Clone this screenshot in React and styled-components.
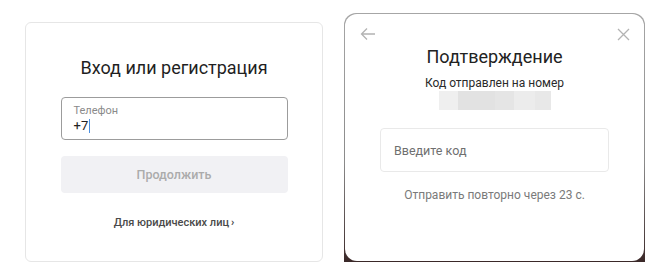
import React from 'react'
import styled, { createGlobalStyle } from 'styled-components'

const Global = createGlobalStyle`
  html, body {
    margin: 0;
    padding: 0;
    background: #fff;
    font-family: Roboto, 'Noto Sans', sans-serif;
  }
`

const Page = styled.div`
  display: flex;
  align-items: flex-start;
  gap: 21px;
  padding: 13px 0 0 25px;
  width: 670px;
  height: 280px;
  box-sizing: border-box;
`

const Card = styled.section`
  margin-top: 9px;
  width: 298px;
  height: 240px;
  box-sizing: border-box;
  border: 1px solid #e6e6e6;
  border-radius: 6px;
  padding: 33px 35px 0 35px;
  display: flex;
  flex-direction: column;
  align-items: center;
`

const Title = styled.h2`
  margin: 0;
  font-size: 18px;
  line-height: 24px;
  font-weight: 400;
  color: #1f1f1f;
  text-align: center;
`

const Field = styled.div`
  margin-top: 17px;
  width: 227px;
  height: 43px;
  box-sizing: border-box;
  border: 1px solid #9c9c9c;
  border-radius: 4px;
  padding: 6px 12px 0;
  display: flex;
  flex-direction: column;
`

const FieldLabel = styled.span`
  font-size: 11px;
  line-height: 14px;
  color: #8a8a8a;
`

const FieldValue = styled.span`
  font-size: 13px;
  line-height: 16px;
  color: #222;
  display: flex;
  align-items: center;
`

const Caret = styled.i`
  display: inline-block;
  width: 1px;
  height: 14px;
  margin-left: 1px;
  background: #4b8fe0;
`

const Button = styled.button`
  margin-top: 16px;
  width: 227px;
  height: 37px;
  border: 0;
  border-radius: 4px;
  background: #f1f1f4;
  color: #ababab;
  font-family: inherit;
  font-size: 12.5px;
  font-weight: 500;
`

const Link = styled.a`
  margin-top: 22px;
  font-size: 11px;
  line-height: 16px;
  font-weight: 500;
  color: #4a4a4a;
  text-decoration: none;
`

const Chevron = styled.b`
  font-weight: 700;
  margin-left: 2px;
`

const Frame = styled.div`
  width: 301px;
  height: 249px;
  box-sizing: border-box;
  padding: 1px;
  background: linear-gradient(#a6a6a6, #8a8a8a 60%, #3a2828);
  border-radius: 12px 12px 0 0;
  overflow: hidden;
  display: flex;
`

const Modal = styled.div`
  flex: 1;
  background: #fff;
  border-radius: 12px;
  display: flex;
  flex-direction: column;
  align-items: center;
`

const ModalHead = styled.div`
  align-self: stretch;
  height: 20px;
  margin-top: 10px;
  padding: 0 14px 0 15px;
  display: flex;
  align-items: center;
  justify-content: space-between;
`

const ModalTitle = styled(Title)`
  margin-top: 1px;
  color: #222;
`

const Sub = styled.p`
  margin: 6px 0 0;
  font-size: 12px;
  line-height: 16px;
  color: #2a2a2a;
`

const Masked = styled.div`
  display: flex;
  height: 19px;
`

const Patch = styled.span`
  width: ${p => p.w}px;
  background: ${p => p.c};
`

const CodeInput = styled.div`
  margin-top: 18px;
  width: 229px;
  height: 44px;
  box-sizing: border-box;
  border: 1px solid #e9e9e9;
  border-radius: 4px;
  padding-left: 13px;
  display: flex;
  align-items: center;
  font-size: 12.5px;
  color: #6f6f6f;
`

const Resend = styled.p`
  margin: 15px 0 0;
  font-size: 12px;
  line-height: 16px;
  color: #7a7a7a;
`

const patches = [
  [19, '#efefef'],
  [37, '#e2e2e2'],
  [19, '#e5e5e5'],
  [21, '#ececec'],
  [16, '#e8e8e8'],
]

export default function App() {
  return (
    <Page>
      <Global />
      <Card>
        <Title>Вход или регистрация</Title>
        <Field>
          <FieldLabel>Телефон</FieldLabel>
          <FieldValue>+7<Caret /></FieldValue>
        </Field>
        <Button disabled>Продолжить</Button>
        <Link href='#'>Для юридических лиц<Chevron>›</Chevron></Link>
      </Card>

      <Frame>
        <Modal>
          <ModalHead>
            <svg width='16' height='14' viewBox='0 0 16 14' fill='none' stroke='#b3b3b3' strokeWidth='1.3'>
              <path d='M15 7H1.5M7 1.5L1.5 7L7 12.5' />
            </svg>
            <svg width='13' height='13' viewBox='0 0 13 13' fill='none' stroke='#b3b3b3' strokeWidth='1.3'>
              <path d='M1 1L12 12M12 1L1 12' />
            </svg>
          </ModalHead>
          <ModalTitle>Подтверждение</ModalTitle>
          <Sub>Код отправлен на номер</Sub>
          <Masked>
            { patches.map(([w, c], i) => <Patch key={i} w={w} c={c} />) }
          </Masked>
          <CodeInput>Введите код</CodeInput>
          <Resend>Отправить повторно через 23 с.</Resend>
        </Modal>
      </Frame>
    </Page>
  )
}
